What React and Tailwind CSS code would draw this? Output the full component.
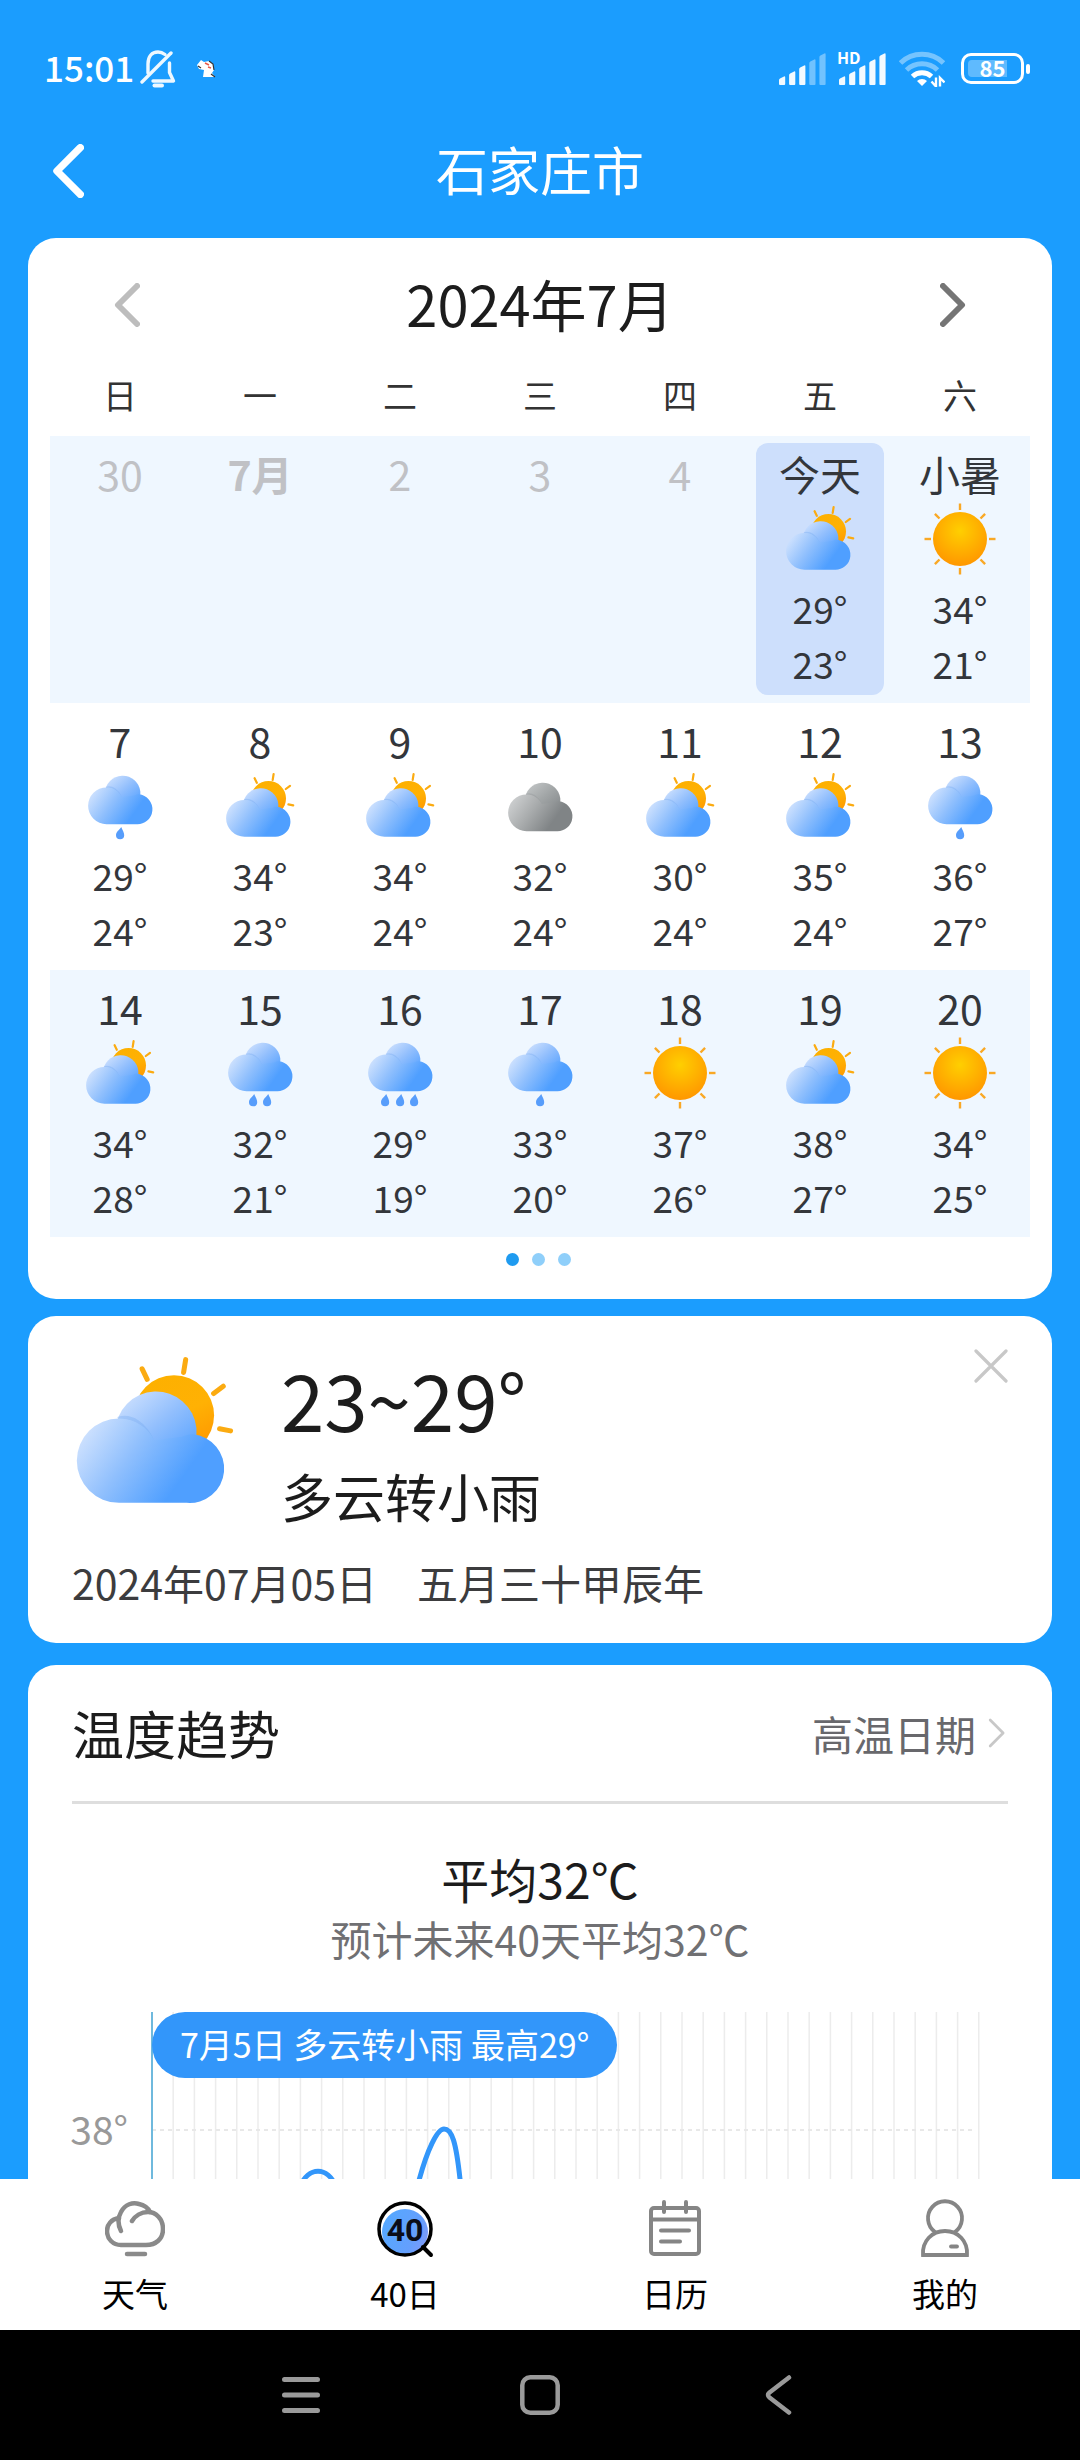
import React, { useState } from 'react';

const weekDays = ['日', '一', '二', '三', '四', '五', '六'];

const weeks = [
  [
    { label: '30', past: true },
    { label: '7月', past: true, first: true },
    { label: '2', past: true },
    { label: '3', past: true },
    { label: '4', past: true },
    { label: '今天', icon: 'partly', high: 29, low: 23 },
    { label: '小暑', icon: 'sun', high: 34, low: 21 },
  ],
  [
    { label: '7', icon: 'rain1', high: 29, low: 24 },
    { label: '8', icon: 'partly', high: 34, low: 23 },
    { label: '9', icon: 'partly', high: 34, low: 24 },
    { label: '10', icon: 'overcast', high: 32, low: 24 },
    { label: '11', icon: 'partly', high: 30, low: 24 },
    { label: '12', icon: 'partly', high: 35, low: 24 },
    { label: '13', icon: 'rain1', high: 36, low: 27 },
  ],
  [
    { label: '14', icon: 'partly', high: 34, low: 28 },
    { label: '15', icon: 'rain2', high: 32, low: 21 },
    { label: '16', icon: 'rain3', high: 29, low: 19 },
    { label: '17', icon: 'rain1', high: 33, low: 20 },
    { label: '18', icon: 'sun', high: 37, low: 26 },
    { label: '19', icon: 'partly', high: 38, low: 27 },
    { label: '20', icon: 'sun', high: 34, low: 25 },
  ],
];

const rainDrops = {
  rain1: [32],
  rain2: [25, 39],
  rain3: [17, 32, 46],
};

// Shared gradients, referenced by every weather icon
const Gradients = () => (
  <svg className="absolute w-0 h-0" aria-hidden="true">
    <defs>
      <linearGradient id="blueBody" gradientUnits="userSpaceOnUse" x1="3" y1="18" x2="42" y2="46">
        <stop offset="0" stopColor="#d3e4fe" />
        <stop offset="0.5" stopColor="#8fbffd" />
        <stop offset="1" stopColor="#4f9fff" />
      </linearGradient>
      <linearGradient id="bluePuff" gradientUnits="userSpaceOnUse" x1="20" y1="4" x2="46" y2="34">
        <stop offset="0" stopColor="#d0e2fe" />
        <stop offset="0.5" stopColor="#92bffd" />
        <stop offset="1" stopColor="#57a2ff" />
      </linearGradient>
      <linearGradient id="greyBody" gradientUnits="userSpaceOnUse" x1="3" y1="18" x2="42" y2="46">
        <stop offset="0" stopColor="#cfd1d2" />
        <stop offset="0.5" stopColor="#a9acad" />
        <stop offset="1" stopColor="#808486" />
      </linearGradient>
      <linearGradient id="greyPuff" gradientUnits="userSpaceOnUse" x1="20" y1="4" x2="46" y2="34">
        <stop offset="0" stopColor="#c3c6c7" />
        <stop offset="0.5" stopColor="#a2a6a7" />
        <stop offset="1" stopColor="#85898b" />
      </linearGradient>
      <radialGradient id="sunFill" cx="0.5" cy="0.35" r="0.65">
        <stop offset="0" stopColor="#ffcf00" />
        <stop offset="1" stopColor="#ff9700" />
      </radialGradient>
      <linearGradient id="sunBehind" x1="0.3" y1="0" x2="0.8" y2="1">
        <stop offset="0" stopColor="#fdb000" />
        <stop offset="0.5" stopColor="#ffb104" />
        <stop offset="1" stopColor="#ff9500" />
      </linearGradient>
      <linearGradient id="badgeFill" x1="0" y1="0.3" x2="1" y2="0.7">
        <stop offset="0" stopColor="#55a8ff" />
        <stop offset="0.7" stopColor="#649ffd" />
        <stop offset="1" stopColor="#7f9af8" />
      </linearGradient>
    </defs>
  </svg>
);

const Cloud = ({ x, y, grey }) => (
  <g transform={`translate(${x} ${y})`}>
    <path
      d="M17 20a17.700 17.700 0 0 1 35.300 -1.500 V30 H26 Z"
      fill={grey ? 'url(#greyPuff)' : 'url(#bluePuff)'}
    />
    <path
      d="M18 14.500 C24 12.500 30 17 33 24"
      fill="none"
      stroke={grey ? '#8b8f91' : '#6ba3ee'}
      strokeOpacity="0.3"
      strokeWidth="1.600"
    />
    <path
      d="M18.500 51.200a18.400 18.400 0 0 1 0 -36.800c7 0 12.500 4 15.500 9.500l12 -1.500c2 -1 3.500 -1.300 4.800 -1.100a15 15 0 0 1 -2.800 29.900z"
      fill={grey ? 'url(#greyBody)' : 'url(#blueBody)'}
    />
  </g>
);

const WeatherIcon = ({ type, className }) => {
  if (type === 'sun') {
    return (
      <svg viewBox="0 0 72 72" className={className} aria-hidden="true">
        <g stroke="#f9a825" strokeWidth="2.400">
          {[0, 45, 90, 135, 180, 225, 270, 315].map((angle) => (
            <path key={angle} d="M36 0.500v6.500" transform={`rotate(${angle} 36 36)`} />
          ))}
        </g>
        <circle cx="36" cy="36" r="27" fill="url(#sunFill)" />
      </svg>
    );
  }

  if (type === 'partly') {
    return (
      <svg viewBox="0 0 72 72" className={className} aria-hidden="true">
        <g stroke="#fbab11" strokeWidth="2.200" strokeLinecap="round">
          <path d="M30.600 8.200l2.200 4.600M49.600 4.200l-0.900 5.600M66 15.800l-4.200 3.200M69.200 35.300l-4.800 -0.900" />
        </g>
        <circle cx="44.500" cy="28.500" r="17.500" fill="url(#sunBehind)" />
        <Cloud x={2} y={15.5} />
      </svg>
    );
  }

  if (type === 'overcast') {
    return (
      <svg viewBox="0 0 72 72" className={className} aria-hidden="true">
        <Cloud x={4} y={10} grey />
      </svg>
    );
  }

  return (
    <svg viewBox="0 0 72 72" className={className} aria-hidden="true">
      <Cloud x={4} y={3} />
      {rainDrops[type].map((x) => (
        <path
          key={x}
          d="M5.200 0C6.800 4 8.200 5.600 8.200 8.200a4.100 4.100 0 0 1 -8.200 0C0 5 3 3.200 5.200 0z"
          transform={`translate(${x} 57)`}
          fill="#579dfb"
        />
      ))}
    </svg>
  );
};

const Chevron = ({ dir, className, strokeWidth }) => (
  <svg viewBox="0 0 26 44" className={className} fill="none" stroke="currentColor" strokeWidth={strokeWidth} strokeLinecap="round" strokeLinejoin="round" aria-hidden="true">
    <path d={dir === 'left' ? 'M23 3L4 22l19 19' : 'M3 3l19 19L3 41'} />
  </svg>
);

const Signal = ({ level }) => (
  <svg viewBox="0 0 48 32" className="w-12 h-8" fill="#fff" aria-hidden="true">
    {[8, 13, 19, 25, 31].map((h, i) => (
      <path
        key={h}
        d={`M${i * 10.1} 31V${35 - h}q0 -1 1 -1.600l4 -2q1.200 -0.500 1.200 1V31q0 1 -1 1h-4.200q-1 0 -1 -1z`}
        opacity={i < level ? 0.95 : 0.38}
      />
    ))}
  </svg>
);

const StatusBar = () => (
  <div className="flex items-center justify-between h-[137px] pl-11 pr-[50px] text-white">
    <div className="flex items-center">
      <span className="pb-1 text-[35px] leading-10 font-medium">15:01</span>
      <svg viewBox="0 0 36 38" className="ml-1.5 w-9 h-[38px]" fill="none" stroke="#eef8ff" strokeWidth="3.400" strokeLinecap="round" strokeLinejoin="round" aria-hidden="true">
        <path d="M2 32L31 3" />
        <path d="M8 23V14C8 6 12 2 18 2c3 0 5 1 7 2.500" />
        <path d="M29.500 13v9.500l4 8.500H13" />
        <path d="M14.500 35.500h7.500" strokeWidth="4" />
      </svg>
      <svg viewBox="0 0 20 20" className="ml-5 w-5 h-5" aria-hidden="true">
        <path d="M1 6l4 -5 3 2 5 -1 4 3 1 6 -2 3 3 4h-12l1 -7 -5 -1z" fill="#fff" />
        <path d="M13 2l4 3 1 6M2 7l3 2M15 15l4 3" stroke="#333" strokeWidth="1.200" fill="none" />
        <path d="M9 4l4 2M12 8l3 1" stroke="#e85b4a" strokeWidth="1.500" />
      </svg>
    </div>
    <div className="flex items-center">
      <Signal level={3} />
      <div className="relative ml-3">
        <Signal level={5} />
        <span className="absolute -left-0.5 -top-1 text-base leading-4 font-bold">HD</span>
      </div>
      <svg viewBox="0 0 46 36" className="ml-3 w-[46px] h-9" fill="none" stroke="#fff" aria-hidden="true">
        <path d="M1.500 12a31 31 0 0 1 43 0" strokeWidth="5" opacity="0.4" />
        <path d="M7.500 19a22.500 22.500 0 0 1 31 0" strokeWidth="5" opacity="0.4" />
        <path d="M13.500 25.500a14 14 0 0 1 19 0" strokeWidth="5" />
        <path d="M18 30a7 7 0 0 1 10 0l-5 5z" fill="#fff" stroke="none" />
        <path d="M37 26.500v9l-4.500 -5M41 35.500v-8.500l4.500 4.500" strokeWidth="2.400" />
      </svg>
      <div className="ml-4 flex items-center">
        <div className="flex w-[63px] h-[31px] p-1 rounded-[10px] border-3 border-white">
          <div className="flex items-center justify-center w-full rounded-sm bg-gradient-to-r from-white/30 from-80% to-transparent to-80%">
            <span className="pb-1 text-[22px] leading-5 font-bold">85</span>
          </div>
        </div>
        <div className="ml-0.5 w-1 h-2.5 rounded-sm bg-white"></div>
      </div>
    </div>
  </div>
);

const DayCell = ({ day, selected, onSelect }) => {
  if (day.past) {
    return (
      <div className="mx-1.5 h-[252px] pt-1.5 text-center text-[#c0c1c5]">
        <span className={`text-[41px] leading-12 ${day.first ? 'font-bold' : ''}`}>{day.label}</span>
      </div>
    );
  }

  return (
    <button
      onClick={onSelect}
      className={`flex flex-col items-center w-32 max-w-full h-[252px] mx-auto pt-1.5 rounded-xl text-[#33363b] ${selected ? 'bg-[#cddffc]' : ''}`}
    >
      <span className="text-[41px] leading-12 whitespace-nowrap">{day.label}</span>
      <WeatherIcon type={day.icon} className="mt-1.5 w-[72px] h-[72px]" />
      <span className="mt-1.5 text-[37px] leading-[55px]">{day.high}°</span>
      <span className="text-[37px] leading-[55px]">{day.low}°</span>
    </button>
  );
};

const CalendarCard = () => {
  const [selected, setSelected] = useState('今天');

  return (
    <section className="bg-white rounded-[28px] px-[22px] pb-[33px]">
      <div className="flex items-center justify-between h-[134px] px-16">
        <button aria-label="上个月" className="text-[#bdbdbd]">
          <Chevron dir="left" className="w-[26px] h-11" strokeWidth={6} />
        </button>
        <h2 className="pb-1 text-[56px] leading-[60px] text-[#1c1c1c]">2024年7月</h2>
        <button aria-label="下个月" className="text-[#757575]">
          <Chevron dir="right" className="w-[26px] h-11" strokeWidth={6} />
        </button>
      </div>
      <table className="w-full table-fixed">
        <thead>
          <tr>
            {weekDays.map((name) => (
              <th key={name} className="h-16 p-0 pb-[18px] text-[34px] leading-10 font-normal text-[#333]">{name}</th>
            ))}
          </tr>
        </thead>
        <tbody>
          {weeks.map((week, i) => (
            <tr key={i} className="odd:bg-[#eff7ff]">
              {week.map((day) => (
                <td key={day.label} className="p-0 pt-[7px] pb-2 align-top">
                  <DayCell day={day} selected={day.label === selected} onSelect={() => setSelected(day.label)} />
                </td>
              ))}
            </tr>
          ))}
        </tbody>
      </table>
      <div className="flex justify-center gap-[13px] pt-4 pr-1">
        <span className="w-[13px] h-[13px] rounded-full bg-[#1f9bf0]"></span>
        <span className="w-[13px] h-[13px] rounded-full bg-[#8fcffa]"></span>
        <span className="w-[13px] h-[13px] rounded-full bg-[#8fcffa]"></span>
      </div>
    </section>
  );
};

const DetailCard = () => (
  <section className="relative mt-[17px] h-[327px] bg-white rounded-[28px] px-11 pt-[34px]">
    <div className="flex">
      <WeatherIcon type="partly" className="w-[165px] h-[165px]" />
      <div className="ml-11 text-[#1c1c1c]">
        <div className="text-[78px] leading-[96px]">23~29°</div>
        <div className="text-[52px] leading-[100px]">多云转小雨</div>
      </div>
    </div>
    <div className="flex gap-10 mt-3 text-[41px] leading-12 text-[#3c3c3e]">
      <span>2024年07月05日</span>
      <span>五月三十甲辰年</span>
    </div>
    <button aria-label="关闭" className="absolute right-11 top-[33px] text-[#c8c8c8]">
      <svg viewBox="0 0 34 34" className="w-[34px] h-[34px]" stroke="currentColor" strokeWidth="3.200" strokeLinecap="round" aria-hidden="true">
        <path d="M2 2l30 30M32 2L2 32" />
      </svg>
    </button>
  </section>
);

const TrendChart = () => (
  <div className="flex pr-[73px] mt-11">
    <div className="w-[124px] shrink-0 pt-[92px] pr-6 text-right text-[39px] leading-12 text-[#999]">38°</div>
    <div className="relative flex-1">
      <svg viewBox="0 0 827 320" className="w-full overflow-visible" fill="none" aria-hidden="true">
        {Array.from({ length: 39 }, (_, i) => (
          <path key={i} d={`M${(i + 1) * 21.2} 0V320`} stroke="#ececec" strokeWidth="1.500" />
        ))}
        <path d="M0 118H820" stroke="#e8e8e8" strokeWidth="2" strokeDasharray="4 4" />
        <path d="M0 0V320" stroke="#6fb9dd" strokeWidth="2" />
        <path
          d="M0 290C50 290 90 250 120 230C135 215 142 190 148 175C156 154 176 154 184 175C196 215 205 240 220 240C245 240 255 215 264 180C275 135 286 117 292 117C300 117 304 130 308 167C311 200 318 230 330 250"
          stroke="#3296fa"
          strokeWidth="5"
        />
      </svg>
      <div className="absolute left-0 top-0 h-[66px] px-7 rounded-full bg-[#3296fa] text-white text-[34px] leading-[64px] whitespace-nowrap">
        7月5日 多云转小雨 最高29°
      </div>
    </div>
  </div>
);

const TrendCard = () => (
  <section className="mt-[22px] bg-white rounded-t-[28px]">
    <div className="mx-11 flex items-center justify-between h-[139px] border-b-3 border-[#dedede]">
      <h2 className="text-[52px] leading-[60px] text-[#1c1c1c]">温度趋势</h2>
      <a href="#high" className="flex items-center text-[41px] leading-12 text-[#68686c]">
        高温日期
        <Chevron dir="right" className="ml-3 mr-0.5 w-[18px] h-[30px] text-[#c8c8c8]" strokeWidth={4} />
      </a>
    </div>
    <div className="pt-11 text-center">
      <p className="text-5xl leading-[60px] text-[#1c1c1c]">平均32℃</p>
      <p className="text-[41px] leading-[60px] text-[#707073]">预计未来40天平均32℃</p>
    </div>
    <TrendChart />
  </section>
);

const tabs = [
  {
    name: '天气',
    icon: (
      <g fill="none" stroke="#8a8a8a" strokeWidth="4.500" strokeLinecap="round" strokeLinejoin="round">
        <path d="M16 32C13 26 12 20 16 13C20 5 28 3 34 5C39 6 43 9 45 13" />
        <path d="M14 19C6 20 2 26 2 32C2 40 8 46 16 46H41C51 46 58 40 58 30C58 20 51 13 43 13C36 13 30 17 27 22" />
        <path d="M22 55H40" />
      </g>
    ),
  },
  {
    name: '40日',
    icon: (
      <g>
        <circle cx="30" cy="33" r="23" fill="url(#badgeFill)" />
        <circle cx="30" cy="30" r="26" fill="none" stroke="#000" strokeWidth="3.500" />
        <path d="M48 48l8 8" stroke="#000" strokeWidth="4" strokeLinecap="round" />
        <text x="30" y="42" textAnchor="middle" fontFamily="Roboto, sans-serif" fontSize="32" fontWeight="700" fill="#0b0d18">40</text>
      </g>
    ),
  },
  {
    name: '日历',
    icon: (
      <g fill="none" stroke="#858585" strokeWidth="4" strokeLinecap="round">
        <rect x="6" y="9" width="48" height="46" rx="3" />
        <path d="M6 20.500H54M19 3v10M41 3v10M16 31.500H44M16 42.500H35" />
      </g>
    ),
  },
  {
    name: '我的',
    icon: (
      <g fill="none" stroke="#858585" strokeWidth="3.800" strokeLinecap="round">
        <path d="M20 33A17 17 0 1 1 40 33" />
        <path d="M8 56C7 42 17 32 30 32S53 42 52 56Z" />
        <path d="M36 47.500h6" />
      </g>
    ),
  },
];

const TabBar = () => (
  <nav className="grid grid-cols-4 h-[151px] shrink-0 bg-white">
    {tabs.map((tab) => (
      <button key={tab.name} className="flex flex-col items-center pt-5 text-black">
        <svg viewBox="0 0 60 60" className="w-[60px] h-[60px]" aria-hidden="true">{tab.icon}</svg>
        <span className="mt-3.5 text-[33px] leading-10">{tab.name}</span>
      </button>
    ))}
  </nav>
);

const SystemBar = () => (
  <div className="flex items-center justify-center gap-[199px] h-[130px] shrink-0 bg-black text-[#9a9a9a]">
    <button aria-label="菜单">
      <svg viewBox="0 0 40 40" className="w-10 h-10" stroke="currentColor" strokeWidth="5" strokeLinecap="round" aria-hidden="true">
        <path d="M3.500 4.500h33M3.500 20h33M3.500 35.500h33" />
      </svg>
    </button>
    <button aria-label="主屏幕">
      <svg viewBox="0 0 40 40" className="w-10 h-10" fill="none" stroke="currentColor" strokeWidth="4.500" aria-hidden="true">
        <rect x="2.300" y="2.300" width="35.400" height="35.400" rx="8" />
      </svg>
    </button>
    <button aria-label="返回">
      <svg viewBox="0 0 40 40" className="w-10 h-10" fill="none" stroke="currentColor" strokeWidth="4.500" strokeLinecap="round" strokeLinejoin="round" aria-hidden="true">
        <path d="M30 2.500L10.500 17.500Q7.500 20 10.500 22.500L30 37.500" />
      </svg>
    </button>
  </div>
);

const App = () => {
  return (
    <div className="flex flex-col h-screen bg-[#1b9dfe] font-['Noto_Sans_CJK_SC',sans-serif]">
      <Gradients />
      <StatusBar />
      <header className="grid grid-cols-[1fr_auto_1fr] items-center h-[68px] mb-[33px] shrink-0 px-[52px] text-white">
        <button aria-label="返回上一页" className="justify-self-start">
          <Chevron dir="left" className="w-8 h-[54px]" strokeWidth={6} />
        </button>
        <h1 className="pb-1 text-[52px] leading-[60px]">石家庄市</h1>
      </header>
      <main className="flex-1 min-h-0 overflow-y-auto [scrollbar-width:none] px-7">
        <CalendarCard />
        <DetailCard />
        <TrendCard />
      </main>
      <TabBar />
      <SystemBar />
    </div>
  );
};

export default App;
